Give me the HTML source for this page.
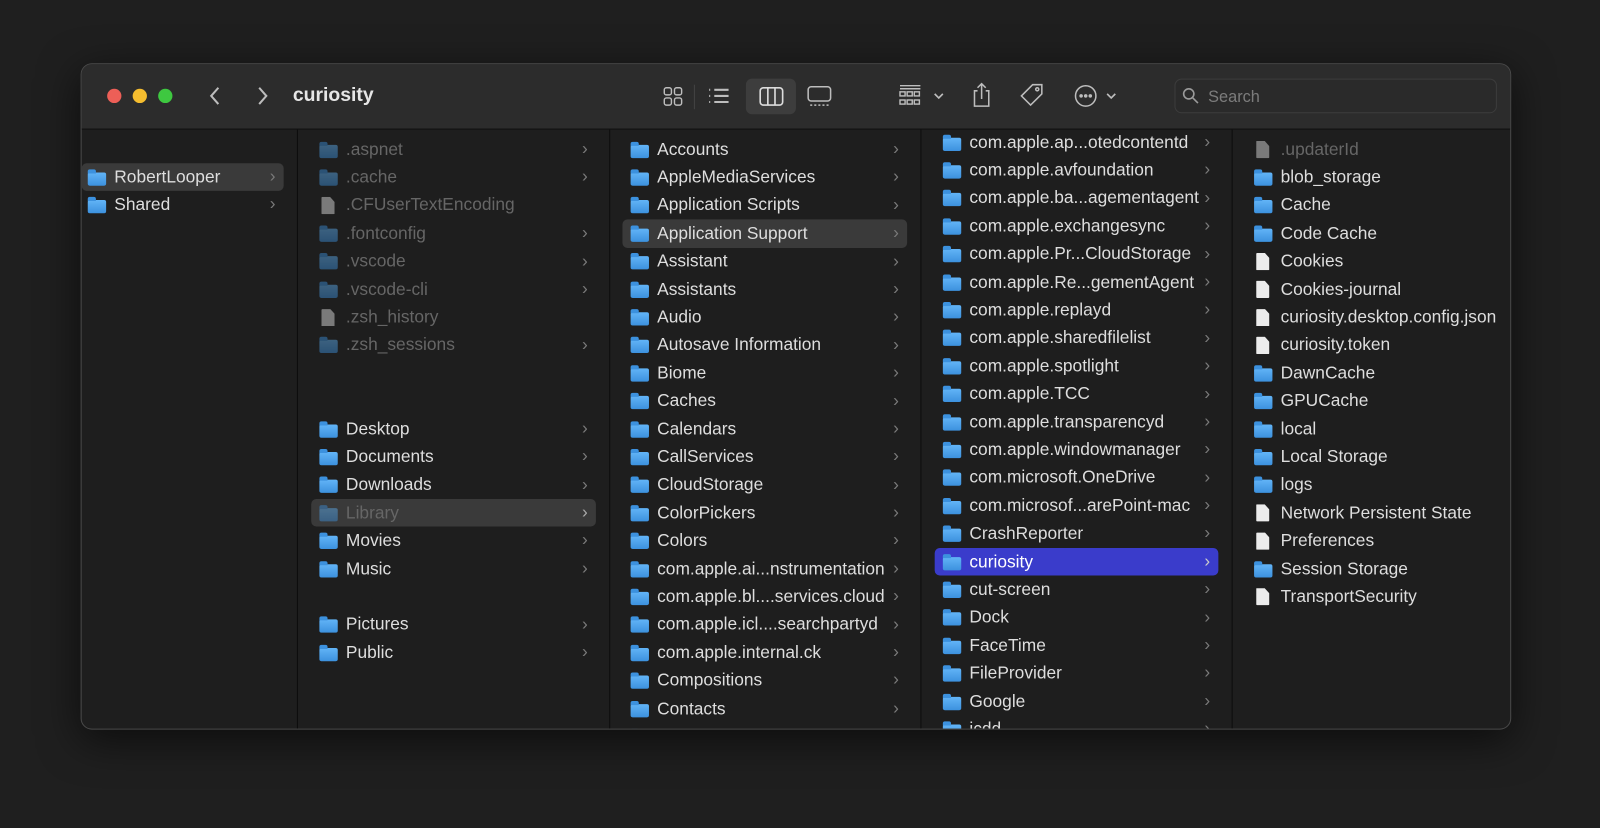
<!DOCTYPE html>
<html><head><meta charset="utf-8"><style>
*{box-sizing:border-box;margin:0;padding:0}
body{width:1600px;height:827px;background:#1f1f1f;font-family:"Liberation Sans",sans-serif;position:relative;overflow:hidden}
.sc{position:absolute;left:0;top:0;width:1568px;height:811px;transform:scale(1.0204);transform-origin:0 0}
.win{position:absolute;left:79px;top:62px;width:1402px;height:653px;border-radius:11px;background:#1e1e1e;overflow:hidden;border:1px solid #4a4a4a;box-shadow:0 10px 40px rgba(0,0,0,.6)}
.tb{position:absolute;left:0;top:0;width:100%;height:64px;background:#2c2c2c;border-bottom:1px solid #0e0e0e}
.dot{position:absolute;top:24px;width:14px;height:14px;border-radius:50%}
.title{position:absolute;left:207px;top:20px;color:#e6e6e6;font-weight:bold;font-size:19px}
.col{position:absolute;top:64px;bottom:0;border-right:1px solid #0d0d0d;overflow:hidden}
.list{position:absolute;left:0;right:0}
.r{height:27.4px;display:flex;align-items:center;position:relative;font-size:17px;color:#dedede;white-space:nowrap}
.r .t{margin-left:8px}
.r .c{position:absolute;right:8px;top:3px;color:#7a7a7a;font-size:17px}
.dim{color:#666}.dim .f,.dim .d{opacity:.45}
.f{width:18px;height:13px;background:linear-gradient(#62b4f7,#3c91de);border-radius:2px;position:relative;margin-top:3px;flex:none}
.f::before{content:'';position:absolute;left:0;top:-3px;width:8px;height:4px;background:#3c91de;border-radius:2px 2px 0 0}
.d{width:13px;height:17px;background:#ececec;flex:none;clip-path:polygon(0 0,65% 0,100% 30%,100% 100%,0 100%);border-radius:1px;margin:0 3px 0 2px}
.sel{background:#3a3a3a;border-radius:5px}
.blue{background:#3a3ccb;border-radius:5px}
</style></head><body>
<div class="sc">
<div class="win">
 <div class="tb">
  <div class="dot" style="left:25px;background:#ed5f57"></div>
  <div class="dot" style="left:50px;background:#f5bd2f"></div>
  <div class="dot" style="left:75px;background:#3ec840"></div>
  <svg style="position:absolute;left:124px;top:20px" width="14" height="22"><path d="M10 3L3 11l7 8" stroke="#bdbdbd" stroke-width="2" fill="none"/></svg>
  <svg style="position:absolute;left:170px;top:20px" width="14" height="22"><path d="M4 3l7 8-7 8" stroke="#bdbdbd" stroke-width="2" fill="none"/></svg>
  <div class="title">curiosity</div>
  <svg style="position:absolute;left:569px;top:21px" width="22" height="22" fill="none" stroke="#bdbdbd" stroke-width="1.4"><rect x="2" y="2" width="7" height="7" rx="2"/><rect x="12" y="2" width="7" height="7" rx="2"/><rect x="2" y="12" width="7" height="7" rx="2"/><rect x="12" y="12" width="7" height="7" rx="2"/></svg>
  <div style="position:absolute;left:600px;top:20px;width:1px;height:24px;background:#444"></div>
  <svg style="position:absolute;left:612px;top:21px" width="26" height="22" fill="none" stroke="#bdbdbd" stroke-width="2"><path d="M3 4h1M3 10h1M3 16h1M8 4h14M8 10h14M8 16h14"/></svg>
  <div style="position:absolute;left:651px;top:14px;width:49px;height:35px;background:#3d3d3d;border-radius:6px"></div>
  <svg style="position:absolute;left:663px;top:21px" width="26" height="22" fill="none" stroke="#dcdcdc" stroke-width="1.6"><rect x="2" y="2" width="22" height="17" rx="3"/><path d="M9.5 2v17M16.5 2v17"/></svg>
  <svg style="position:absolute;left:710px;top:20px" width="26" height="24" fill="none" stroke="#bdbdbd" stroke-width="1.5"><rect x="2" y="2" width="22" height="14" rx="3"/><path d="M4 20h18" stroke-dasharray="2 2"/></svg>
  <svg style="position:absolute;left:800px;top:18px" width="28" height="26" fill="none" stroke="#bdbdbd" stroke-width="1.4"><path d="M2 3h20M2 6h20"/><rect x="2" y="9" width="5" height="4"/><rect x="9" y="9" width="5" height="4"/><rect x="16" y="9" width="5" height="4"/><rect x="2" y="17" width="5" height="4"/><rect x="9" y="17" width="5" height="4"/><rect x="16" y="17" width="5" height="4"/></svg>
  <svg style="position:absolute;left:834px;top:26px" width="12" height="10" fill="none" stroke="#bdbdbd" stroke-width="1.6"><path d="M2 3l4 4 4-4"/></svg>
  <svg style="position:absolute;left:871px;top:16px" width="22" height="28" fill="none" stroke="#bdbdbd" stroke-width="1.5"><path d="M7 10H4v15h14V10h-3M11 18V3M7 7l4-4 4 4"/></svg>
  <svg style="position:absolute;left:918px;top:17px" width="28" height="28" fill="none" stroke="#bdbdbd" stroke-width="1.5"><path d="M14 3h9v9L12 23 3 14z"/><circle cx="18.5" cy="7.5" r="1.5"/></svg>
  <svg style="position:absolute;left:972px;top:19px" width="26" height="26" fill="none" stroke="#bdbdbd" stroke-width="1.5"><circle cx="12" cy="12" r="10"/><circle cx="7.5" cy="12" r="1" fill="#bdbdbd"/><circle cx="12" cy="12" r="1" fill="#bdbdbd"/><circle cx="16.5" cy="12" r="1" fill="#bdbdbd"/></svg>
  <svg style="position:absolute;left:1003px;top:26px" width="12" height="10" fill="none" stroke="#bdbdbd" stroke-width="1.6"><path d="M2 3l4 4 4-4"/></svg>
  <div style="position:absolute;left:1071px;top:14px;width:316px;height:34px;border:1px solid #3c3c3c;border-radius:7px;background:#2a2a2a"></div>
  <svg style="position:absolute;left:1078px;top:22px" width="18" height="18" fill="none" stroke="#9a9a9a" stroke-width="1.6"><circle cx="7" cy="7" r="5"/><path d="M11 11l5 5"/></svg>
  <div style="position:absolute;left:1104px;top:24px;color:#7c7c7c;font-size:16px">Search</div>
 </div>

 <div class="col" style="left:0;width:212px">
  <div class="list" style="top:33px;left:0;right:13px">
   <div class="r sel" style="padding-left:6px"><div class="f"></div><span class="t">RobertLooper</span><span class="c">›</span></div>
   <div class="r" style="padding-left:6px"><div class="f"></div><span class="t">Shared</span><span class="c">›</span></div>
  </div>
 </div>

 <div class="col" style="left:212px;width:306px">
  <div class="list" style="top:6px;left:13px;right:13px;padding-left:8px">
   <div class="r dim"><div class="f"></div><span class="t">.aspnet</span><span class="c">›</span></div>
   <div class="r dim"><div class="f"></div><span class="t">.cache</span><span class="c">›</span></div>
   <div class="r dim"><div class="d"></div><span class="t">.CFUserTextEncoding</span></div>
   <div class="r dim"><div class="f"></div><span class="t">.fontconfig</span><span class="c">›</span></div>
   <div class="r dim"><div class="f"></div><span class="t">.vscode</span><span class="c">›</span></div>
   <div class="r dim"><div class="f"></div><span class="t">.vscode-cli</span><span class="c">›</span></div>
   <div class="r dim"><div class="d"></div><span class="t">.zsh_history</span></div>
   <div class="r dim"><div class="f"></div><span class="t">.zsh_sessions</span><span class="c">›</span></div>
   <div class="r"></div><div class="r"></div>
   <div class="r"><div class="f"></div><span class="t">Desktop</span><span class="c">›</span></div>
   <div class="r"><div class="f"></div><span class="t">Documents</span><span class="c">›</span></div>
   <div class="r"><div class="f"></div><span class="t">Downloads</span><span class="c">›</span></div>
   <div class="r dim sel" style="margin-left:-8px;padding-left:8px"><div class="f"></div><span class="t">Library</span><span class="c" style="color:#aaa">›</span></div>
   <div class="r"><div class="f"></div><span class="t">Movies</span><span class="c">›</span></div>
   <div class="r"><div class="f"></div><span class="t">Music</span><span class="c">›</span></div>
   <div class="r"></div>
   <div class="r"><div class="f"></div><span class="t">Pictures</span><span class="c">›</span></div>
   <div class="r"><div class="f"></div><span class="t">Public</span><span class="c">›</span></div>
  </div>
 </div>

 <div class="col" style="left:518px;width:305px">
  <div class="list" style="top:6px;left:12px;right:13px;padding-left:8px">
   <div class="r"><div class="f"></div><span class="t">Accounts</span><span class="c">›</span></div>
   <div class="r"><div class="f"></div><span class="t">AppleMediaServices</span><span class="c">›</span></div>
   <div class="r"><div class="f"></div><span class="t">Application Scripts</span><span class="c">›</span></div>
   <div class="r sel" style="margin-left:-8px;padding-left:8px"><div class="f"></div><span class="t">Application Support</span><span class="c">›</span></div>
   <div class="r"><div class="f"></div><span class="t">Assistant</span><span class="c">›</span></div>
   <div class="r"><div class="f"></div><span class="t">Assistants</span><span class="c">›</span></div>
   <div class="r"><div class="f"></div><span class="t">Audio</span><span class="c">›</span></div>
   <div class="r"><div class="f"></div><span class="t">Autosave Information</span><span class="c">›</span></div>
   <div class="r"><div class="f"></div><span class="t">Biome</span><span class="c">›</span></div>
   <div class="r"><div class="f"></div><span class="t">Caches</span><span class="c">›</span></div>
   <div class="r"><div class="f"></div><span class="t">Calendars</span><span class="c">›</span></div>
   <div class="r"><div class="f"></div><span class="t">CallServices</span><span class="c">›</span></div>
   <div class="r"><div class="f"></div><span class="t">CloudStorage</span><span class="c">›</span></div>
   <div class="r"><div class="f"></div><span class="t">ColorPickers</span><span class="c">›</span></div>
   <div class="r"><div class="f"></div><span class="t">Colors</span><span class="c">›</span></div>
   <div class="r"><div class="f"></div><span class="t">com.apple.ai...nstrumentation</span><span class="c">›</span></div>
   <div class="r"><div class="f"></div><span class="t">com.apple.bl....services.cloud</span><span class="c">›</span></div>
   <div class="r"><div class="f"></div><span class="t">com.apple.icl....searchpartyd</span><span class="c">›</span></div>
   <div class="r"><div class="f"></div><span class="t">com.apple.internal.ck</span><span class="c">›</span></div>
   <div class="r"><div class="f"></div><span class="t">Compositions</span><span class="c">›</span></div>
   <div class="r"><div class="f"></div><span class="t">Contacts</span><span class="c">›</span></div>
   <div class="r"><div class="f"></div><span class="t">Containers</span><span class="c">›</span></div>
  </div>
 </div>

 <div class="col" style="left:823px;width:305px">
  <div class="list" style="top:-1px;left:13px;right:13px;padding-left:8px">
   <div class="r"><div class="f"></div><span class="t">com.apple.ap...otedcontentd</span><span class="c">›</span></div>
   <div class="r"><div class="f"></div><span class="t">com.apple.avfoundation</span><span class="c">›</span></div>
   <div class="r"><div class="f"></div><span class="t">com.apple.ba...agementagent</span><span class="c">›</span></div>
   <div class="r"><div class="f"></div><span class="t">com.apple.exchangesync</span><span class="c">›</span></div>
   <div class="r"><div class="f"></div><span class="t">com.apple.Pr...CloudStorage</span><span class="c">›</span></div>
   <div class="r"><div class="f"></div><span class="t">com.apple.Re...gementAgent</span><span class="c">›</span></div>
   <div class="r"><div class="f"></div><span class="t">com.apple.replayd</span><span class="c">›</span></div>
   <div class="r"><div class="f"></div><span class="t">com.apple.sharedfilelist</span><span class="c">›</span></div>
   <div class="r"><div class="f"></div><span class="t">com.apple.spotlight</span><span class="c">›</span></div>
   <div class="r"><div class="f"></div><span class="t">com.apple.TCC</span><span class="c">›</span></div>
   <div class="r"><div class="f"></div><span class="t">com.apple.transparencyd</span><span class="c">›</span></div>
   <div class="r"><div class="f"></div><span class="t">com.apple.windowmanager</span><span class="c">›</span></div>
   <div class="r"><div class="f"></div><span class="t">com.microsoft.OneDrive</span><span class="c">›</span></div>
   <div class="r"><div class="f"></div><span class="t">com.microsof...arePoint-mac</span><span class="c">›</span></div>
   <div class="r"><div class="f"></div><span class="t">CrashReporter</span><span class="c">›</span></div>
   <div class="r blue" style="margin-left:-8px;padding-left:8px;color:#fff"><div class="f"></div><span class="t">curiosity</span><span class="c" style="color:#ccc">›</span></div>
   <div class="r"><div class="f"></div><span class="t">cut-screen</span><span class="c">›</span></div>
   <div class="r"><div class="f"></div><span class="t">Dock</span><span class="c">›</span></div>
   <div class="r"><div class="f"></div><span class="t">FaceTime</span><span class="c">›</span></div>
   <div class="r"><div class="f"></div><span class="t">FileProvider</span><span class="c">›</span></div>
   <div class="r"><div class="f"></div><span class="t">Google</span><span class="c">›</span></div>
   <div class="r"><div class="f"></div><span class="t">icdd</span><span class="c">›</span></div>
  </div>
 </div>

 <div class="col" style="left:1128px;width:274px;border-right:none">
  <div class="list" style="top:6px;left:13px;right:0;padding-left:8px">
   <div class="r dim"><div class="d"></div><span class="t">.updaterId</span></div>
   <div class="r"><div class="f"></div><span class="t">blob_storage</span></div>
   <div class="r"><div class="f"></div><span class="t">Cache</span></div>
   <div class="r"><div class="f"></div><span class="t">Code Cache</span></div>
   <div class="r"><div class="d"></div><span class="t">Cookies</span></div>
   <div class="r"><div class="d"></div><span class="t">Cookies-journal</span></div>
   <div class="r"><div class="d"></div><span class="t">curiosity.desktop.config.json</span></div>
   <div class="r"><div class="d"></div><span class="t">curiosity.token</span></div>
   <div class="r"><div class="f"></div><span class="t">DawnCache</span></div>
   <div class="r"><div class="f"></div><span class="t">GPUCache</span></div>
   <div class="r"><div class="f"></div><span class="t">local</span></div>
   <div class="r"><div class="f"></div><span class="t">Local Storage</span></div>
   <div class="r"><div class="f"></div><span class="t">logs</span></div>
   <div class="r"><div class="d"></div><span class="t">Network Persistent State</span></div>
   <div class="r"><div class="d"></div><span class="t">Preferences</span></div>
   <div class="r"><div class="f"></div><span class="t">Session Storage</span></div>
   <div class="r"><div class="d"></div><span class="t">TransportSecurity</span></div>
  </div>
 </div>
</div>
</div>
</body></html>
